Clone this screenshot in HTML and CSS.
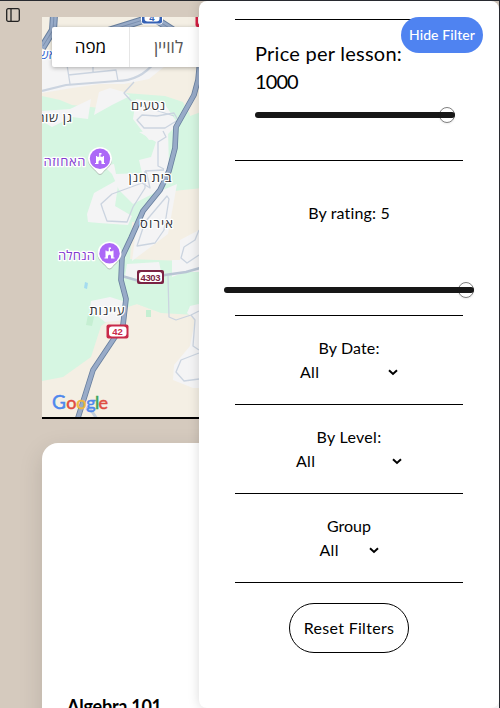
FILE: index.html
```html
<!DOCTYPE html>
<html lang="en">
<head>
<meta charset="utf-8">
<title>Lessons</title>
<link rel="stylesheet" href="styles.css">
</head>
<body>
<div class="page">
  <aside class="rail">
    <svg width="16" height="16" viewBox="0 0 16 16" fill="none" stroke="#222" stroke-width="1.3"><rect x="1.7" y="1.7" width="12.6" height="12.6" rx="1.5"/><path d="M6 2v12"/></svg>
  </aside>
  <main class="content">
    <section class="map">
      <svg class="map-art" width="170" height="400" viewBox="42 17 170 400">
        <rect x="42" y="17" width="170" height="400" fill="#f4efe4"/>
        <path fill="#f4f4f5" d="M42 50H165L170 62L149 79L124 84L100 84L72 88L42 93Z"/>
        <path fill="#d6f6e2" d="M42 96L60 100L72 105L100 108L125 93L165 96L183 102L188 112H212V188L178 191L165 225L132 222L128 300L161 313L137 304L125 308L101 326L91 357L63 377L42 381Z"/>
        <path fill="#f4efe4" d="M186 100L212 60V108L190 116Z"/>
        <path fill="#f4efe4" d="M174 191L212 187V262L160 259L165 225Z"/>
        <path fill="#d6f6e2" d="M128 259L212 262V316L161 313L137 304L126 305Z"/>
        <g fill="#f4f4f5">
          <path d="M70 109L91 99L88 119L72 117L52 127L42 121V111Z"/>
          <path d="M99 92L110 88L124 92L130 96L112 105L94 115Z"/>
          <path d="M136 99L164 103L178 124L163 139L149 140L133 119Z"/>
          <path d="M94 193L119 179L115 206L132 216L128 225L99 223L88 222L87 214Z"/>
          <path d="M104 166L114 164L116 174L142 173L139 160L151 157L156 142L139 132L168 130L169 167L164 188L133 204L119 190L112 174Z"/>
          <path d="M158 192L177 184L168 234L132 261L137 223Z"/>
          <path d="M127 264L159 262L162 276L142 280L125 276Z"/>
          <path d="M172 260H190L191 270L172 277Z"/>
          <path d="M91 301L110 297L126 302L126 320L105 322L90 310Z"/>
          <path d="M180 240L199 230H212V272H190L180 263Z"/>
          <path d="M190 306L212 301V388L193 388L173 380L174 365L190 346L195 320L187 313Z"/>
        </g>
        <path fill="#c5efd2" d="M88 315L94 317L92 326L86 325ZM146 310h5v7h-5Z"/>
        <path fill="#a5dcef" d="M85 282l3 1-1 6-3-1Z"/>
        <g fill="none" stroke="#cbd4e0" stroke-width="1.3" stroke-linejoin="round">
          <path stroke-width="2.2" d="M42 91L66 85L117 81Q140 81 155 62"/>
          <path d="M67 65L70 84M68 75L116 70L118 81M93 65v7M134 82L124 93L133 103L174 116"/>
          <path d="M142 115L157 116L174 113L178 120L165 128L144 128L137 120Z"/>
          <path d="M163 131L166 137L158 142V166L164 169M145 171L164 170M145 171V188L133 207L127 222L107 221L103 210L101 204L112 194L142 183L150 188L146 171"/>
          <path d="M167 196L145 222L137 246L155 243L164 230L169 199Z"/>
          <path d="M184 247L195 240L199 230M184 247L181 258L187 263L199 255M168 276L169 317L176 320L191 315L195 320L193 346L199 350M199 353L181 360L176 372L184 381L199 379M191 315L199 311"/>
        </g>
        <g fill="none" stroke="#b9c5d4" stroke-width="2.6"><path d="M122 276L139 281L165 275L186 272L200 268"/></g>
        <g fill="none" stroke-linejoin="round">
          <g stroke="#687f9e" stroke-width="5.600">
            <path stroke-width="8" d="M54 15L53 30L42 48"/>
            <path stroke-width="8" d="M108 31L140 21L152 17L174 31"/>
            <path d="M201 50L198 80L194 95L176 127L175 148L169 171L160 190L143 211L131 238L122 257L121 280L126 299L123 325L93 370L77 421"/>
          </g>
          <g stroke="#98abc8" stroke-width="4">
            <path stroke-width="6" d="M54 15L53 30L42 48"/>
            <path stroke-width="6" d="M108 31L140 21L152 17L174 31"/>
            <path d="M201 50L198 80L194 95L176 127L175 148L169 171L160 190L143 211L131 238L122 257L121 280L126 299L123 325L93 370L77 421"/>
          </g>
          <path stroke="#7489aa" stroke-width=".8" d="M54 15L53 30L43 46M108 31L140 21L152 17L174 31"/>
          <path stroke="#c3cfdd" stroke-width="3" d="M86 408L91 410L97 419"/>
        </g>
        <rect x="141.500" y="8" width="21" height="16" rx="2.5" fill="#3561b4" stroke="#fff" stroke-width="1"/>
        <rect x="144.500" y="9" width="15" height="12.500" rx="3" fill="#fff"/>
        <text class="shield blue" x="152" y="20.500">4</text>
        <rect x="195.500" y="12" width="20" height="15" rx="2" fill="#d61f43"/><rect x="198" y="14" width="15" height="11" rx="3" fill="#fff"/>
        <rect x="106.500" y="324.500" width="22" height="14" rx="2" fill="#c92a49"/><rect x="109" y="326.500" width="17.500" height="10" rx="3" fill="#fff"/>
        <text class="shield red" x="117.500" y="335">42</text>
        <rect x="137" y="270" width="27" height="14" rx="2" fill="#7b2344"/><rect x="139" y="272" width="23" height="10" rx="2.500" fill="#fff"/>
        <text class="shield wine" x="150.500" y="280.500" textLength="20">4303</text>
        <g class="place">
          <text x="148" y="110" textLength="34">נטעים</text>
          <text x="55" y="122" textLength="34">גן שור</text>
          <text x="150" y="182" textLength="43">בית חנן</text>
          <text x="156.500" y="228" textLength="33">אירוס</text>
          <text x="107" y="315" textLength="35">עיינות</text>
          <text class="purple" x="64.500" y="166" textLength="42">האחוזה</text>
          <text class="purple" x="76.500" y="260" textLength="37">הנחלה</text>
          <text class="station" x="48" y="59">אש</text>
        </g>
        <g id="pin-a">
          <path d="M100 147a12 12 0 0 1 12 12c0 6-6 9-9 13q-3 4-6 0c-3-4-9-7-9-13a12 12 0 0 1 12-12Z" fill="#999" opacity=".6" transform="translate(0 1)"/>
          <path d="M100 147a12 12 0 0 1 12 12c0 6-6 9-9 13q-3 4-6 0c-3-4-9-7-9-13a12 12 0 0 1 12-12Z" fill="#fff"/>
          <circle cx="100" cy="158.700" r="10.200" fill="#ac68f7"/>
          <path fill="#fff" d="M96 156h1v.8h2.200v-3.800h2.300v1.500h-1v2.300h2.500v-.8h1v7h1v1h-3.500v-2.300a1.500 1.500 0 0 0-3 0v2.300H95v-1h1Z"/>
        </g>
        <use href="#pin-a" x="9.500" y="94.500"/>
        <g class="logo">
          <text x="52" y="409"><tspan fill="#4e87ed" stroke="#4e87ed" font-size="19">G</tspan><tspan fill="#df4b40" stroke="#df4b40" x="66.200">o</tspan><tspan fill="#efb83d" stroke="#efb83d" x="76.200">o</tspan><tspan fill="#4e87ed" stroke="#4e87ed" x="86.300">g</tspan><tspan fill="#3ca45a" stroke="#3ca45a" x="95">l</tspan><tspan fill="#df4b40" stroke="#df4b40" x="98.500">e</tspan></text>
        </g>
      </svg>
      <div class="map-types">
        <button class="type sat">לוויין</button>
        <button class="type active">מפה</button>
      </div>
    </section>
    <article class="card"><h2>Algebra 101</h2></article>
  </main>
</div>
<section class="drawer">
  <button class="hide">Hide Filter</button>
  <div class="group price">
    <div class="price-label"><span class="l1">Price per lesson:</span><br><span class="l2">1000</span></div>
    <div class="slider"><span class="thumb"></span></div>
  </div>
  <div class="group rating">
    <div class="caption t-rating">By rating: 5</div>
    <div class="slider wide"><span class="thumb"></span></div>
  </div>
  <div class="group pick">
    <div class="caption t-date">By Date:</div>
    <div class="select date"><span>All</span><svg width="10" height="7" viewBox="0 0 10 7"><path d="M1 1.300L5 5L9 1.300"/></svg></div>
  </div>
  <div class="group pick">
    <div class="caption t-level">By Level:</div>
    <div class="select level"><span>All</span><svg width="10" height="7" viewBox="0 0 10 7"><path d="M1 1.300L5 5L9 1.300"/></svg></div>
  </div>
  <div class="group pick">
    <div class="caption">Group</div>
    <div class="select kind"><span>All</span><svg width="10" height="7" viewBox="0 0 10 7"><path d="M1 1.300L5 5L9 1.300"/></svg></div>
  </div>
  <div class="group last"><button class="reset">Reset Filters</button></div>
</section>
</body>
</html>
```
FILE: styles.css
```css
* { box-sizing: border-box; }
html, body { height: 100%; }
body {
  margin: 0;
  overflow: hidden;
  position: relative;
  background: #d5cabe;
  color: #000;
  font: 16px/24px Lato, "Open Sans", sans-serif;
  border-top: 1px solid #282a30;
  border-right: 1px solid #282a30;
}
button { font: inherit; margin: 0; padding: 0; border: 0; background: none; color: inherit; }
.page { display: flex; height: 707px; overflow: hidden; }
.rail { flex: 0 0 42px; padding: 6px 0 0 5px; }
.rail svg { display: block; }
.content { flex: 1; padding-top: 16px; }
.map { height: 402px; border-bottom: 2px solid #000; position: relative; overflow: hidden; }
.map-art { display: block; }
.map text { font-family: "Open Sans", "Noto Sans", "Liberation Sans", sans-serif; text-anchor: middle; }
.place text { font-size: 13px; font-weight: 500; fill: #303134; stroke: #fff; stroke-width: 2.5px; stroke-linejoin: round; paint-order: stroke; }
.place .purple { fill: #8139cf; }
.place .station { fill: #3266d2; }
.map .shield { font: bold 9.5px "Liberation Sans", sans-serif; }
.shield.blue { fill: #3561b4; }
.shield.red { fill: #c92a49; }
.shield.wine { fill: #7b2344; }
.map .logo text { font: 18px Lato, sans-serif; text-anchor: start; stroke-width: .5px; }
.map-types { position: absolute; left: 10px; top: 10px; display: flex; flex-direction: row-reverse; justify-content: flex-end; height: 40px; border-radius: 2px; box-shadow: 0 1px 4px rgba(0,0,0,.3); background: #fff; }
.type { height: 40px; font: 17px/40px "Open Sans", "Liberation Sans", sans-serif; color: #565656; width: 77px; }
.type.active { color: #000; font-weight: 500; width: 78px; border-right: 1px solid #e6e6e6; }
.card { margin-top: 24px; height: 500px; background: #fff; border-radius: 16px; padding: 249px 25px 0; box-shadow: 0 8px 24px rgba(0,0,0,.13); }
.card h2 { margin: 0; font-size: 18px; line-height: 28px; font-weight: 700; letter-spacing: -.25px; }

.drawer {
  position: absolute;
  top: 0;
  right: 0;
  width: 300px;
  height: 707px;
  padding: 18px 36px 0;
  background: #fff;
  border-radius: 8px;
  box-shadow: 0 0 12px rgba(0,0,0,.15);
}
.hide {
  position: absolute;
  right: 16px;
  top: 16px;
  width: 82px;
  height: 36px;
  border-radius: 18px;
  background: #4f83f1;
  color: #fff;
  font-size: 14px;
  font-weight: 500;
  letter-spacing: .1px;
}
.group { border-top: 1px solid #000; display: flex; flex-direction: column; align-items: center; text-align: center; }
.price { height: 141px; align-items: flex-start; padding: 19px 20px 0; text-align: left; }
.price-label { font-size: 20px; line-height: 28px; white-space: nowrap; }
.l1 { letter-spacing: .25px; }
.l2 { letter-spacing: -.9px; }
.slider { position: relative; width: 200px; height: 6px; border-radius: 3px; background: #171717; margin-top: 17px; }
.thumb { position: absolute; right: 0; top: -5px; width: 16px; height: 16px; border: 1px solid #808080; border-radius: 50%; background: #fff; box-shadow: 0 1px 2px rgba(0,0,0,.08); }
.thumb::after { content: ""; position: absolute; left: -1px; right: -1px; top: 4px; height: 6px; background: #171717; border-radius: 0 3px 3px 0; }
.rating { height: 155px; padding-top: 40px; }
.slider.wide { width: 250px; margin-top: 62px; }
.t-rating { letter-spacing: .15px; }
.t-date { letter-spacing: .15px; }
.t-level { letter-spacing: .3px; }
.pick { height: 89px; padding-top: 20px; }
.select { display: flex; justify-content: space-between; align-items: center; letter-spacing: .3px; }
.select svg { fill: none; stroke: #000; stroke-width: 2; }
.date { width: 98px; }
.level { width: 106px; }
.kind { width: 59px; }
.last { padding-top: 20px; }
.reset { width: 120px; height: 50px; border: 1px solid #000; border-radius: 25px; letter-spacing: .3px; }
```
